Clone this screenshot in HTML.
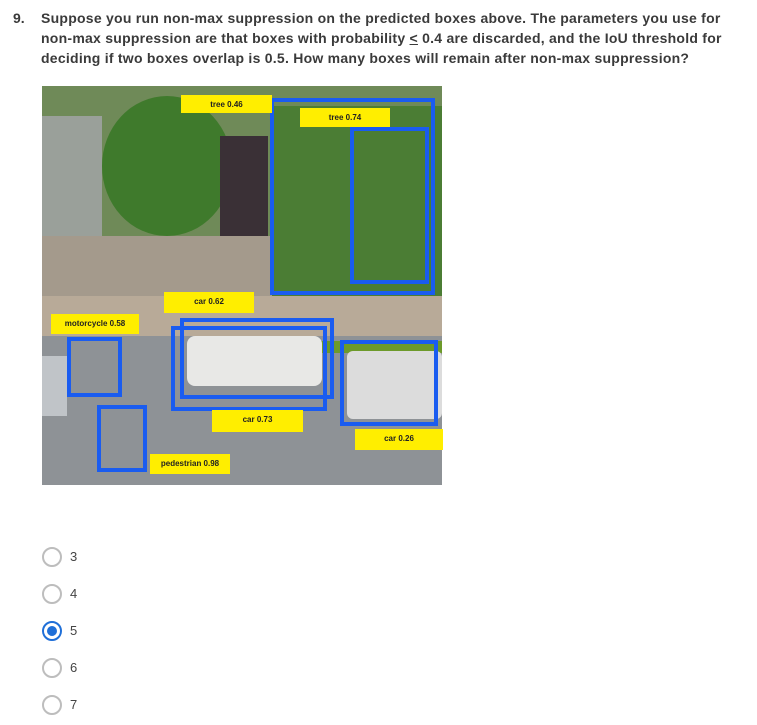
<!DOCTYPE html>
<html><head><meta charset="utf-8"><style>
body{margin:0;background:#fff;width:757px;height:725px;position:relative;overflow:hidden;font-family:"Liberation Sans",sans-serif;}
.q{position:absolute;left:13px;top:8px;font-size:14px;letter-spacing:0.25px;font-weight:bold;color:#3a3a3a;line-height:20px;white-space:nowrap}
.q .n{position:absolute;left:0;top:0;letter-spacing:0}
.q .t{position:absolute;left:28px;top:0;}
.img{position:absolute;left:42px;top:86px;width:400px;height:399px;overflow:hidden;background:#8a8f86}
.img div{position:absolute}
.b{border:4px solid #1a5cf0;box-sizing:border-box}
.l{background:#ffee00;font-size:8px;font-weight:bold;color:#222;text-align:center;line-height:19px}
.opt{position:absolute;left:42px;width:200px;height:20px}
.opt .c{position:absolute;left:0;top:0;width:16px;height:16px;border:2px solid #bdbdbd;border-radius:50%}
.opt .v{position:absolute;left:28px;top:2px;font-size:13px;color:#444}
.opt.s .c{border-color:#1f6fd8}
.opt.s .c::after{content:"";position:absolute;left:3px;top:3px;width:10px;height:10px;border-radius:50%;background:#1f6fd8}
</style></head><body>
<div class="q"><span class="n">9.</span><span class="t">Suppose you run non-max suppression on the predicted boxes above. The parameters you use for<br>non-max suppression are that boxes with probability <u>&lt;</u> 0.4 are discarded, and the IoU threshold for<br>deciding if two boxes overlap is 0.5. How many boxes will remain after non-max suppression?</span></div>
<div class="img">
 <div style="left:0;top:0;width:400px;height:210px;background:#6f8a58"></div>
 <div style="left:60px;top:10px;width:130px;height:140px;background:#3f7a2c;border-radius:50%"></div>
 <div style="left:230px;top:20px;width:170px;height:190px;background:#4b7d34"></div>
 <div style="left:0;top:30px;width:60px;height:120px;background:#9aa09a"></div>
 <div style="left:178px;top:50px;width:48px;height:140px;background:#3a3036"></div>
 <div style="left:0;top:150px;width:230px;height:60px;background:#a49a8c"></div>
 <div style="left:0;top:210px;width:400px;height:40px;background:#b8aa98"></div>
 <div style="left:0;top:250px;width:400px;height:149px;background:#8e9296"></div>
 <div style="left:150px;top:255px;width:250px;height:12px;background:#6d9a2a"></div>
 <div style="left:145px;top:250px;width:135px;height:50px;background:#e8e8e6;border-radius:8px"></div>
 <div style="left:305px;top:265px;width:95px;height:68px;background:#dcdcdc;border-radius:6px"></div>
 <div style="left:0;top:270px;width:25px;height:60px;background:#c0c4c8"></div>
</div>
<div class="b" style="left:270px;top:98px;width:165px;height:197px;position:absolute"></div>
<div class="b" style="left:350px;top:127px;width:79px;height:157px;position:absolute"></div>
<div class="b" style="left:180px;top:318px;width:154px;height:81px;position:absolute"></div>
<div class="b" style="left:171px;top:326px;width:156px;height:85px;position:absolute"></div>
<div class="b" style="left:67px;top:337px;width:55px;height:60px;position:absolute"></div>
<div class="b" style="left:97px;top:405px;width:50px;height:67px;position:absolute"></div>
<div class="b" style="left:340px;top:340px;width:98px;height:86px;position:absolute"></div>
<div class="l" style="position:absolute;left:181px;top:95px;width:91px;height:18px">tree 0.46</div>
<div class="l" style="position:absolute;left:300px;top:108px;width:90px;height:19px">tree 0.74</div>
<div class="l" style="position:absolute;left:164px;top:292px;width:90px;height:21px">car 0.62</div>
<div class="l" style="position:absolute;left:51px;top:314px;width:88px;height:20px">motorcycle 0.58</div>
<div class="l" style="position:absolute;left:212px;top:410px;width:91px;height:22px">car 0.73</div>
<div class="l" style="position:absolute;left:150px;top:454px;width:80px;height:20px">pedestrian 0.98</div>
<div class="l" style="position:absolute;left:355px;top:429px;width:88px;height:21px">car 0.26</div>
<div class="opt" style="top:547px"><div class="c"></div><div class="v">3</div></div>
<div class="opt" style="top:584px"><div class="c"></div><div class="v">4</div></div>
<div class="opt s" style="top:621px"><div class="c"></div><div class="v">5</div></div>
<div class="opt" style="top:658px"><div class="c"></div><div class="v">6</div></div>
<div class="opt" style="top:695px"><div class="c"></div><div class="v">7</div></div>
</body></html>
